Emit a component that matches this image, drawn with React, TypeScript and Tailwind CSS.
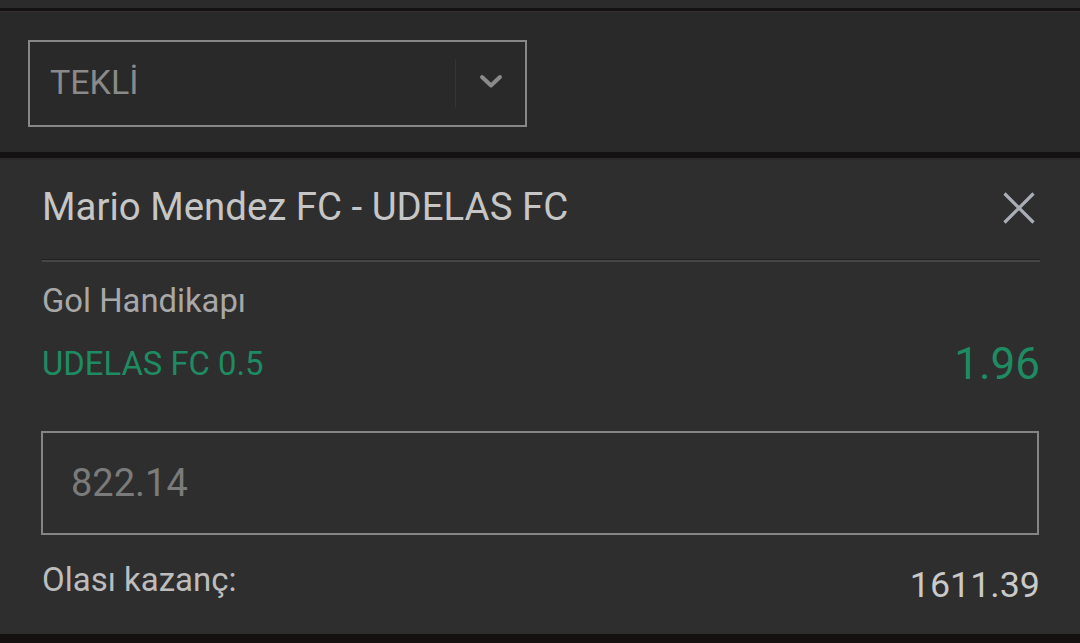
import React from "react";

const font = { fontFamily: "Roboto, 'Noto Sans', sans-serif" };

const App = () => {
  return (
    <div className="w-[1080px] h-[643px] overflow-hidden bg-[#2b2b2b] flex flex-col" style={font}>
      {/* previous content edge */}
      <div className="h-[8px] bg-[#2b2b2b]" />
      <div className="h-[3px] bg-[#141212]" />
      <div className="h-px bg-[#3a2f2f]" />

      {/* Bet type select */}
      <section className="h-[140px] bg-[#292929] pl-[28px] pt-[28px]">
        <div className="w-[499px] h-[87px] border-2 border-[#878787] flex items-center">
          <span className="flex-1 pl-[20px] text-[34px] text-[#8a8a8a] leading-none pb-[3px]">TEKLİ</span>
          <div className="w-px h-[49px] bg-[#343434]" />
          <div className="w-[69px] flex justify-center items-center pb-[4px]">
            <svg width="24" height="15" viewBox="0 0 24 15" fill="none">
              <path d="M3 3 L12 11.5 L21 3" stroke="#8a8a8a" strokeWidth="4" strokeLinecap="round" strokeLinejoin="round" />
            </svg>
          </div>
        </div>
      </section>

      <div className="h-[6px] bg-[#141212]" />
      <div className="h-[2px] bg-[#2a2a2a]" />

      {/* Bet slip item */}
      <section className="flex-1 bg-[#2e2e2e] pl-[42px] pr-[40px]">
        <div className="h-[99px] flex items-center justify-between">
          <h2 className="text-[38.4px] text-[#c6c6c6] leading-none pb-[4px]">Mario Mendez FC - UDELAS FC</h2>
          <button className="mr-[4px] mb-[3px]">
            <svg width="34" height="34" viewBox="0 0 34 34" fill="none">
              <path d="M2.5 2.5 L31.5 31.5 M31.5 2.5 L2.5 31.5" stroke="#a9adb5" strokeWidth="3.2" />
            </svg>
          </button>
        </div>
        <div className="h-px bg-[#202020]" />
        <div className="h-[2px] bg-[#464646]" />

        <div className="mt-[19px] text-[32.8px] leading-[40px] text-[#a8a8a8]">Gol Handikapı</div>

        <div className="mt-[19px] h-[48px] flex items-center justify-between">
          <span className="text-[32.8px] text-[#1e8b63] leading-none">UDELAS FC 0.5</span>
          <span className="text-[44px] text-[#1e8b63] leading-none">1.96</span>
        </div>

        <div className="mt-[43px] ml-[-1px] mr-[1px] h-[104px] border-2 border-[#858585] flex items-center pl-[28px]">
          <span className="text-[38px] text-[#7b7b7b] leading-none">822.14</span>
        </div>

        <div className="mt-[25px] flex justify-between items-start">
          <span className="text-[33px] leading-[40px] text-[#bdbdbd]">Olası kazanç:</span>
          <span className="mt-[5px] text-[35.8px] leading-[40px] text-[#c9c9c9]">1611.39</span>
        </div>
      </section>

      <div className="h-[9px] bg-[#151111]" />
    </div>
  );
};

export default App;
